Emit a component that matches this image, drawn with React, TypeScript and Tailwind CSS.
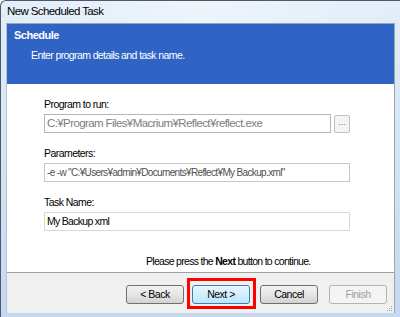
import React from 'react';

const ui = { fontFamily: '"Liberation Sans", "Noto Sans CJK JP", sans-serif' };

const Btn = ({ label, kind }: { label: string; kind?: 'default' | 'disabled' }) => {
  const base = 'h-[19px] w-[58px] rounded-[3px] border text-[10.5px] tracking-[-0.5px] leading-[17px] text-center';
  if (kind === 'default') {
    return (
      <div className={`${base} border-[#3c7fb1] bg-gradient-to-b from-[#eaf6fd] to-[#bee6fd] text-black`}>
        {label}
      </div>
    );
  }
  if (kind === 'disabled') {
    return <div className={`${base} border-[#b5b5b5] bg-[#f4f4f4] text-[#9d9d9d]`}>{label}</div>;
  }
  return (
    <div className={`${base} border-[#707070] bg-gradient-to-b from-[#f2f2f2] via-[#e6e6e6] to-[#d2d2d2] text-black`}>
      {label}
    </div>
  );
};

export default function App() {
  return (
    <div
      style={ui}
      className="w-[400px] h-[317px] flex flex-col overflow-hidden rounded-tl-[6px] border-l border-t border-[#4a5a6a] bg-gradient-to-b from-[#e3eef9] via-[#d4e4f4] to-[#c4d9ef]"
    >
      {/* Title bar */}
      <div className="h-[22px] flex items-center pl-[6px] text-[11.5px] tracking-[-0.6px] text-black bg-gradient-to-r from-transparent via-white/40 to-transparent">
        New Scheduled Task
      </div>

      {/* Client area */}
      <div className="flex-1 flex flex-col ml-[5px] mr-[5px] mb-[4px] border-t border-r border-[#9aa5b0] border-l border-l-[#b8c6d4]">
        {/* Header */}
        <div className="h-[60px] bg-[#2f63c4] text-white pl-[7px] pt-[4px]">
          <div className="text-[11px] tracking-[-0.5px] font-bold leading-[14px]">Schedule</div>
          <div className="text-[10.5px] tracking-[-0.6px] leading-[13px] mt-[7px] pl-[17px]">
            Enter program details and task name.
          </div>
        </div>

        {/* Content */}
        <div className="flex-1 bg-white flex flex-col pl-[37px] pt-[14px] text-[10.5px] tracking-[-0.55px] leading-[13px]">
          <div className="text-black">Program to run:</div>
          <div className="flex items-center mt-[3px]">
            <div className="w-[287px] h-[19px] border border-[#b5b5b5] text-[11.5px] tracking-[-0.6px] leading-[17px] pl-[2px] text-[#7d7d7d] bg-white truncate">
              C:¥Program Files¥Macrium¥Reflect¥reflect.exe
            </div>
            <div className="ml-[3px] w-[16px] h-[18px] border border-[#c0c0c0] rounded-[2px] bg-[#f4f4f4] text-[9px] tracking-normal leading-[13px] text-center text-[#5a6fa8]">
              ...
            </div>
          </div>

          <div className="text-black mt-[14px]">Parameters:</div>
          <div className="mt-[3px] w-[306px] h-[19px] border border-[#c6c6c6] text-[10px] tracking-[-0.65px] leading-[17px] pl-[2px] text-[#505050] truncate">
            -e -w "C:¥Users¥admin¥Documents¥Reflect¥My Backup.xml"
          </div>

          <div className="text-black mt-[14px]">Task Name:</div>
          <div className="mt-[3px] w-[306px] h-[19px] border border-[#d8d8d8] text-[10.5px] tracking-[-0.7px] leading-[17px] pl-[2px] text-black">
            My Backup xml
          </div>

          <div className="text-black mt-[24px] pl-[102px] tracking-[-0.7px]">
            Please press the <span className="font-bold">Next</span> button to continue.
          </div>
        </div>

        {/* Bottom bar */}
        <div className="h-[41px] bg-[#f0f0f0] border-t border-[#a0a0a0] flex items-start justify-end pr-[7px] pt-[12px] relative">
          <div className="flex gap-[8px]">
            <Btn label="< Back" />
            <div className="relative">
              <Btn label="Next >" kind="default" />
              <div className="absolute -left-[5px] -top-[7px] w-[69px] h-[31px] border-[3px] border-[#ff0000]" />
            </div>
            <div className="ml-[2px]">
              <Btn label="Cancel" />
            </div>
            <div className="ml-[3px]">
              <Btn label="Finish" kind="disabled" />
            </div>
          </div>
          {/* resize grip */}
          <svg className="absolute right-[1px] bottom-[1px]" width="8" height="8" viewBox="0 0 8 8">
            <rect x="6" y="2" width="1" height="1" fill="#a0a0a0" />
            <rect x="4" y="4" width="1" height="1" fill="#a0a0a0" />
            <rect x="6" y="4" width="1" height="1" fill="#a0a0a0" />
            <rect x="2" y="6" width="1" height="1" fill="#a0a0a0" />
            <rect x="4" y="6" width="1" height="1" fill="#a0a0a0" />
            <rect x="6" y="6" width="1" height="1" fill="#a0a0a0" />
          </svg>
        </div>
      </div>
    </div>
  );
}
